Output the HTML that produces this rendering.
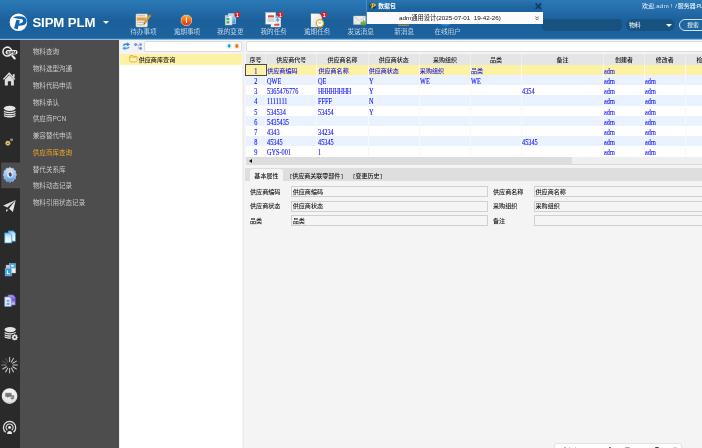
<!DOCTYPE html>
<html lang="zh-CN">
<head>
<meta charset="utf-8">
<title>SIPM PLM</title>
<style>
*{box-sizing:border-box;margin:0;padding:0}
html,body{width:702px;height:448px;overflow:hidden;background:#f3f3f3}
body{position:relative;font-family:"Liberation Sans","Noto Sans CJK SC",sans-serif;font-size:6.1px;color:#222;line-height:1}
.abs{position:absolute}
#app{position:absolute;left:0;top:0;width:702px;height:448px;will-change:transform}
/* header */
#hdr{position:absolute;left:0;top:0;width:702px;height:39.5px;background:linear-gradient(#2b79b6 0,#2570ad 8px,#1c609b 20px,#1d639e 37.6px,#2c78b6 38.6px,#8dbae0 39.5px)}
#logo{position:absolute;left:6px;top:10px;width:28px;height:24px}
#brand{position:absolute;left:32.4px;top:16.3px;font-size:13.2px;font-weight:bold;color:#fff;letter-spacing:-0.1px;white-space:nowrap;line-height:14px}
#caret{position:absolute;left:103px;top:21.3px;width:0;height:0;border-left:3px solid transparent;border-right:3px solid transparent;border-top:3px solid #fff}
.tb{position:absolute;top:28px;font-weight:300;width:40px;text-align:center;color:#fff;font-size:6.6px;line-height:8px;white-space:nowrap;margin-left:.5px}
.ico{position:absolute}
/* sidebar */
#icons{position:absolute;left:0;top:39.5px;width:20px;height:409px;background:#2a2a2a}
#menu{position:absolute;left:20px;top:39.5px;width:99px;height:409px;background:#4d4d4d}
.mi{position:absolute;left:12.8px;color:#cacaca;font-size:6.56px;line-height:8px;white-space:nowrap}
.mi.on{color:#f0a428}
/* tree */
#tree{position:absolute;left:119px;top:39.5px;width:123.3px;height:409px;background:#fff;border-left:1.5px solid #eee}
#treebar{position:absolute;left:0;top:0;width:100%;height:14px;background:#f3f3f3}
.inp{position:absolute;background:#fff;border:0.6px solid #dcdcdc;border-radius:2px}
#trow{position:absolute;left:0;top:14.2px;width:100%;height:11.2px;background:#fdf1a4}
/* right panel */
#right{position:absolute;left:243px;top:39.5px;width:459px;height:409px;background:#f4f4f4;box-shadow:inset .6px 0 0 #e6e6e6}
table{border-collapse:collapse;table-layout:fixed;position:absolute;left:2.7px;top:14.5px;width:486.5px}
th{height:11px;background:#e5e5e5;font-weight:500;color:#111;font-size:6px;text-align:center;border-right:0.6px solid #eeeeee;padding:0;line-height:10px;white-space:nowrap;overflow:hidden}
td{height:10px;font-family:"Liberation Serif","Noto Sans CJK SC",serif;color:#1515f0;-webkit-text-stroke:.15px #1515f0;font-size:6.05px;padding:0;line-height:10px;white-space:nowrap;overflow:hidden;border-right:0.6px solid rgba(255,255,255,.35)}
td span{font-family:"Noto Sans CJK SC",sans-serif;font-size:6.05px;font-weight:500;-webkit-text-stroke:0}
td i.n{font-style:normal;display:inline-block;font-size:7.2px;transform:scaleX(.87);transform-origin:0 50%;position:relative;top:1.5px;-webkit-text-stroke:.12px #1515f0}
td span{position:relative;top:.9px}
td:first-child i.n{transform-origin:50% 50%}
td:first-child{text-align:center;padding:0}
td:nth-child(2),td:nth-child(3){padding-left:1px}
tr.a td{background:#e9f2fe}
tr.b td{background:#fff}
tr.s td{background:#fdf1a4}
tr.h11 td{height:11px;line-height:11px}

#hs{position:absolute;left:3px;top:117.6px;width:460px;height:8.3px;background:#efefef;border-bottom:0.6px solid #d8d8d8}
#thumb{position:absolute;left:0;top:0;width:325.5px;height:8.3px;background:#dddddd}
#larr{position:absolute;left:2.6px;top:2px;width:0;height:0;border-top:2px solid transparent;border-bottom:2px solid transparent;border-right:3.2px solid #111}
#tabs{position:absolute;left:2px;top:128.6px;width:460px;height:12.6px;background:#dedede}
#tab1{position:absolute;left:5px;top:1px;width:33px;height:11.6px;background:#f4f4f4;border-radius:2.5px 2.5px 0 0;text-align:center;font-size:6.1px;line-height:14.2px;color:#111;font-weight:500}
.tab{position:absolute;top:2px;font-size:6px;line-height:12.4px;color:#111;font-weight:500;white-space:nowrap}
.tab b{font-family:"Liberation Mono",monospace;font-weight:normal;font-size:5.6px;letter-spacing:-.4px;position:relative;top:-.3px}
.lb{position:absolute;font-size:6.1px;line-height:8px;color:#111;font-weight:500;white-space:nowrap}
.fi{position:absolute;height:11.2px;border:0.7px solid #d0d0d0;background:#f5f5f5;font-size:6.1px;line-height:9px;color:#111;font-weight:500;padding-left:.5px;white-space:nowrap;border-radius:0.5px}
#ime{position:absolute;left:310.5px;top:403.3px;width:128px;height:10px;background:#fff;border:0.6px solid #e2e2e2;border-radius:3px 3px 0 0}

#sbox{position:absolute;left:541.5px;top:18.600px;width:80.5px;height:12.800px;background:#175280;border-radius:4.500px}
#ssel{position:absolute;left:625.600px;top:18.600px;width:49.600px;height:12.800px;background:#175280;border-radius:6.400px;color:#fff;font-size:5.9px;line-height:12.600px}
#ssel span{position:absolute;left:3.400px;top:0}
#ssel i{position:absolute;left:40.100px;top:5.300px;width:0;height:0;border-left:3.200px solid transparent;border-right:3.200px solid transparent;border-top:3.300px solid #fff}
#sbtn{position:absolute;left:679px;top:18.600px;width:40px;height:12.800px;border:.7px solid #cfe0ee;border-radius:6.400px;color:#fff;font-size:5.8px;line-height:11.600px;padding-left:7.200px;background:#1f659f}
#welcome{position:absolute;left:642px;top:1.900px;color:#fff;font-size:6px;line-height:8px;white-space:nowrap;width:70px;height:8px}
#welcome span{position:absolute;top:0}
#pop{position:absolute;left:366px;top:0;width:176.4px;height:24.200px;border-left:.6px solid #4d8cc0}
#poptitle{position:absolute;left:0;top:0;width:100%;height:12px;background:linear-gradient(#2a77b3,#1e66a2 60%,#1b609b);color:#fff;font-weight:bold;font-size:5.8px;line-height:12.6px}
#poptitle span{position:absolute;left:11.200px;top:0;letter-spacing:.1px}
#popbody{position:absolute;left:.4px;top:12px;width:176px;height:12.200px;background:#fbfbfb;font-size:6.25px;line-height:12px;color:#111}
#popbody span{position:absolute;left:31.6px;top:0;white-space:nowrap}
#ime i{position:absolute;top:3.2px;width:2.4px;height:3px;border-radius:1px 1px 0 0}
</style>
</head>
<body>
<div id="app">
<div id="hdr">
<svg id="logo" viewBox="0 0 523 448"><circle cx="232" cy="228" r="163" fill="#fff"/><path d="M150 340L220 358L258 190L195 180Z" fill="#1465b0"/><path d="M130 137C170 118 260 105 320 125C375 145 398 190 382 232C365 277 300 302 226 292L236 250C280 255 315 235 318 205C320 175 290 160 225 162C190 160 160 150 130 137Z" fill="#1465b0"/></svg>
<svg id="hsvg" class="abs" style="left:0;top:0" width="702" height="40" viewBox="0 0 702 40">
<defs>
<linearGradient id="gOr" x1="0" y1="0" x2="0" y2="1"><stop offset="0" stop-color="#fbb030"/><stop offset=".5" stop-color="#f46a14"/><stop offset="1" stop-color="#e4280c"/></linearGradient>
<linearGradient id="gPap" x1="0" y1="0" x2="1" y2="1"><stop offset="0" stop-color="#ffffff"/><stop offset="1" stop-color="#d8d8d8"/></linearGradient>
<linearGradient id="gBl" x1="0" y1="0" x2="0" y2="1"><stop offset="0" stop-color="#bfe3f7"/><stop offset="1" stop-color="#3c8fd0"/></linearGradient>
<linearGradient id="gGr" x1="0" y1="0" x2="0" y2="1"><stop offset="0" stop-color="#9ad34a"/><stop offset="1" stop-color="#4a9a18"/></linearGradient>
</defs>
<!-- todo notepad -->
<g>
<rect x="136" y="14" width="11.4" height="12.9" rx=".8" fill="#f1eee6" stroke="#cfcabb" stroke-width=".5"/>
<rect x="136.700" y="17.400" width="9.600" height="3.300" fill="#f7a63a"/>
<path d="M138.500 15.800h6.500M138.500 19h6M138.500 22.300h6M138.500 24.800h6.500" stroke="#8c8a84" stroke-width=".6"/>
<path d="M137.300 15.800h.6M137.300 19h.6M137.300 22.300h.6M137.300 24.800h.6" stroke="#6d6b66" stroke-width=".7"/>
<path d="M143.800 24.100l.500-2.100 5.300-7.400 1.500 1.100-5.300 7.400z" fill="#e2a233" stroke="#9c6a18" stroke-width=".35"/>
<path d="M149.600 14.600l.600-.800 1.500 1.100-.600.800z" fill="#d8362c"/>
<path d="M143.800 24.100l.3-1.300 .8.600z" fill="#333"/>
</g>
<!-- overdue octagon -->
<g>
<path d="M184 15.300h4.800l2.700 2.700v4.700l-2.700 2.700h-4.800l-2.700-2.700v-4.700z" fill="url(#gOr)" stroke="#f3d2c0" stroke-width=".7" stroke-linejoin="round"/>
<rect x="185.900" y="17.300" width="1.100" height="5.800" rx=".4" fill="#fff"/>
</g>
<!-- my changes -->
<g>
<rect x="228.400" y="13.800" width="7.300" height="10" fill="url(#gBl)" stroke="#d8ecf8" stroke-width=".5"/>
<rect x="231" y="15.500" width="1.200" height="6" fill="#fff" opacity=".8"/>
<rect x="225.200" y="15.500" width="6.800" height="9.500" fill="#e9eef2" stroke="#b9c4cc" stroke-width=".5"/>
<rect x="226.400" y="18" width="3" height="2.300" fill="#4fae5b"/><rect x="226.400" y="21.200" width="3" height="2.300" fill="#4fae5b"/>
<rect x="226.400" y="16.300" width="2" height="1" fill="#5aa0d8"/>
<circle cx="237.300" cy="14.700" r="3" fill="#d8202c"/>
<text x="237.300" y="16.600" font-family="Liberation Sans,sans-serif" font-size="5" font-weight="bold" fill="#fff" text-anchor="middle">1</text>
</g>
<!-- my tasks -->
<g>
<rect x="271" y="16" width="9.800" height="11" fill="#f4f4f4" stroke="#d0d0d0" stroke-width=".4"/>
<rect x="274" y="23.700" width="5.400" height="2" fill="#e8433c"/>
<rect x="265.700" y="12.500" width="10" height="11.600" fill="#f7f7f7" stroke="#d0d0d0" stroke-width=".4"/>
<rect x="268" y="15.300" width="6" height="2.100" fill="#e8433c"/>
<rect x="267.500" y="18.200" width="7" height="3.800" fill="#c9d6e2"/>
<path d="M275.500 16c2 .2 3 1.500 3 3.500h1.300l-2.100 2.800-2.100-2.800h1.300c0-1.300-.5-2-1.400-2.300z" fill="#4aa3e0" stroke="#9cd0f2" stroke-width=".3"/>
<circle cx="280.400" cy="14.700" r="3" fill="#d8202c"/>
<text x="280.400" y="16.600" font-family="Liberation Sans,sans-serif" font-size="5" font-weight="bold" fill="#fff" text-anchor="middle">1</text>
</g>
<!-- overdue task -->
<g>
<path d="M311 13.700h8.300l2.500 2.500v10.900h-10.800z" fill="url(#gPap)" stroke="#cfcfcf" stroke-width=".3"/>
<circle cx="319.900" cy="23.300" r="3.600" fill="#fbfbf6" stroke="#e9a81e" stroke-width="1.200"/>
<path d="M318.300 22.300l1.600 1.100 1.500-1" stroke="#777" stroke-width=".6" fill="none"/>
<circle cx="324.100" cy="14.700" r="3" fill="#d8202c"/>
<text x="324.100" y="16.600" font-family="Liberation Sans,sans-serif" font-size="5" font-weight="bold" fill="#fff" text-anchor="middle">1</text>
</g>
<!-- send message -->
<g>
<rect x="353.500" y="16" width="12" height="8.400" rx=".5" fill="#ececec" stroke="#c4c4c4" stroke-width=".4"/>
<path d="M353.700 16.300l5.800 4.500 5.800-4.500" stroke="#a8a8a8" stroke-width=".5" fill="none"/>
<path d="M353.800 24.200l4.200-4M365.200 24.200l-4.200-4" stroke="#cdcdcd" stroke-width=".4" fill="none"/>
<path d="M360.800 22h2.400v-2.200l3 3.400-3 3.400v-2.200h-2.400z" fill="url(#gGr)" stroke="#3f8a14" stroke-width=".3"/>
</g>
<!-- new message / online user fragments -->
<rect x="398" y="24.600" width="11" height="1.300" fill="#b08a55"/>
<path d="M440.500 24.300h10c-1.500 1.600-8.500 1.600-10 0z" fill="#3d9be8"/>
</svg>
<div id="sbox"></div>
<div id="ssel"><span>物料</span><i></i></div>
<div id="sbtn">搜索</div>
<div id="welcome"><span style="left:0">欢迎,</span><span style="left:14.3px;letter-spacing:.35px;opacity:.85">adm</span><span style="left:28.6px;opacity:.85">!</span><span style="left:33.3px">/</span><span style="left:35.7px">服务器</span><span style="left:53.4px;font-size:5.2px;letter-spacing:-.1px">:PLM</span></div>
<div id="pop">
<div id="poptitle"><svg class="abs" style="left:2.300px;top:2.200px" width="8" height="7.200" viewBox="0 0 16 14.400"><ellipse cx="7.400" cy="7.600" rx="7.200" ry="6.400" fill="#133f72"/><path d="M2 9C1 4 6 .5 12 2C7 2 3.500 5 2 9Z" fill="#f5b32a"/><path d="M6.500 3h4.500c2.300 0 3.300 1.500 2.700 3.400c-.6 1.900-2.200 2.900-4.300 2.900h-1.500l-.9 3.500h-3zM8.700 5l-.6 2.300h1.100c.9 0 1.500-.4 1.700-1.200c.2-.8-.2-1.100-1-1.100z" fill="#f8c030"/></svg><span>数据包</span>
<svg class="abs" style="left:168.400px;top:2.500px" width="6.600" height="6.600" viewBox="0 0 6 6"><path d="M.6.6l4.800 4.800M5.400.6L.6 5.400" stroke="#143a60" stroke-width="1.500"/></svg></div>
<div id="popbody"><span>adm通用设计(2025-07-01&nbsp; 19-42-26)</span>
<svg class="abs" style="left:168.100px;top:3.800px" width="4.200" height="4.600" viewBox="0 0 4.600 5"><path d="M.5.500l1.800 1.700L4.100.5M.5 2.700l1.800 1.700 1.800-1.700" stroke="#444" stroke-width=".8" fill="none"/></svg></div>
</div>
<div id="brand">SIPM PLM</div>
<div id="caret"></div>
<div class="tb" style="left:122.9px">待办事项</div>
<div class="tb" style="left:166.4px">逾期事项</div>
<div class="tb" style="left:209.8px">我的变更</div>
<div class="tb" style="left:253.2px">我的任务</div>
<div class="tb" style="left:296.7px">逾期任务</div>
<div class="tb" style="left:340.1px">发送消息</div>
<div class="tb" style="left:383.6px">新消息</div>
<div class="tb" style="left:427.1px">在线用户</div>
</div>
<div id="icons"></div>
<svg id="sideico" class="abs" style="left:0;top:0" width="22" height="448" viewBox="0 0 22 448">
<defs><linearGradient id="gGear" x1="0" y1="0" x2="0" y2="1"><stop offset="0" stop-color="#d6e6fb"/><stop offset=".5" stop-color="#9fc3f3"/><stop offset="1" stop-color="#4f8fe6"/></linearGradient><linearGradient id="gDoc" x1="0" y1="0" x2="0" y2="1"><stop offset="0" stop-color="#7cc6ee"/><stop offset=".4" stop-color="#d4eefb"/><stop offset="1" stop-color="#ffffff"/></linearGradient><linearGradient id="gPur" x1="0" y1="0" x2="0" y2="1"><stop offset="0" stop-color="#a9a0f0"/><stop offset=".5" stop-color="#6a5cd8"/><stop offset="1" stop-color="#e4e0fa"/></linearGradient><radialGradient id="gChat" cx=".5" cy=".35" r=".7"><stop offset="0" stop-color="#ffffff"/><stop offset=".7" stop-color="#e6e6e6"/><stop offset="1" stop-color="#bdbdbd"/></radialGradient></defs>
<rect x="1.2" y="162.500" width="18.800" height="25.700" fill="#4d4d4d"/>
<svg x="0" y="42" width="22" height="22" viewBox="0 0 448 448"><circle cx="150" cy="195" r="90" fill="none" stroke="#ececec" stroke-width="32"/><path d="M252 282L300 335" stroke="#f2f2f2" stroke-width="42" stroke-linecap="round"/><rect x="115" y="165" width="242" height="90" rx="45" fill="#ededed"/><text x="236" y="236" font-family="Liberation Sans,sans-serif" font-weight="bold" font-size="78" fill="#222" text-anchor="middle">SIPM</text></svg>
<svg x="0" y="68" width="22" height="22" viewBox="0 0 448 448"><path d="M98 232L190 140L282 232V358H225V270H160V358H98Z" fill="#dedede"/><path d="M70 232L187 108L305 232" fill="none" stroke="#e6e6e6" stroke-width="28" stroke-linejoin="miter"/><rect x="262" y="125" width="36" height="62" fill="#dedede"/></svg>
<svg x="0" y="101" width="22" height="22" viewBox="0 0 448 448"><ellipse cx="197" cy="150" rx="118.0" ry="55" fill="#e6e6e6"/><path d="M79.0 195c20 38 216.0 38 236.0 0v26c-20 40 -216.0 40 -236.0 0z" fill="#dedede"/><path d="M79.0 237c20 38 216.0 38 236.0 0v26c-20 40 -216.0 40 -236.0 0z" fill="#dedede"/><path d="M79.0 279c20 38 216.0 38 236.0 0v26c-20 40 -216.0 40 -236.0 0z" fill="#dedede"/></svg>
<svg x="0" y="132" width="22" height="22" viewBox="0 0 448 448"><circle cx="160" cy="230" r="50" fill="#dcba68"/><rect x="142" y="222" width="36" height="16" rx="6" fill="#4a3f26"/><circle cx="235" cy="160" r="30" fill="#9a9a9a"/><circle cx="235" cy="160" r="9" fill="#555"/></svg>
<svg x="0" y="163" width="22" height="22" viewBox="0 0 448 448"><path d="M337 240L314 275L319 318L283 334L268 374L230 369L200 395L170 369L132 374L117 334L81 318L86 275L63 240L86 205L81 163L117 146L131 106L170 111L200 85L230 111L268 106L283 146L319 162L314 205Z" fill="url(#gGear)" stroke="#b9d3f5" stroke-width="12" stroke-linejoin="round"/><ellipse cx="203" cy="236" rx="56" ry="66" fill="#dfe9f8"/><ellipse cx="208" cy="234" rx="30" ry="44" fill="#4a4a4a" transform="rotate(-18 208 234)"/></svg>
<svg x="0" y="195" width="22" height="22" viewBox="0 0 448 448"><path d="M65 215L320 100L150 255Z" fill="#dcdcdc"/><path d="M320 100L185 275L262 345Z" fill="#e8e8e8"/><path d="M125 295L172 300L125 348Z" fill="#dcdcdc"/></svg>
<svg x="0" y="226" width="22" height="22" viewBox="0 0 448 448"><path d="M170 100H270L315 145V310H170Z" fill="url(#gDoc)" stroke="#2b9ad6" stroke-width="16" stroke-linejoin="round"/><path d="M95 140H195L240 185V345H95Z" fill="url(#gDoc)" stroke="#2b9ad6" stroke-width="16" stroke-linejoin="round"/></svg>
<svg x="0" y="259" width="22" height="22" viewBox="0 0 448 448"><rect x="190" y="95" width="125" height="92" fill="#4aa8e0" stroke="#8fd0f4" stroke-width="10"/><rect x="225" y="120" width="55" height="40" fill="#cfeaf8"/><rect x="120" y="120" width="80" height="72" fill="#c8c8c8"/><rect x="225" y="185" width="95" height="100" fill="#ededed" stroke="#bdbdbd" stroke-width="8"/><rect x="105" y="190" width="130" height="155" fill="#3a9bdc" stroke="#8fd0f4" stroke-width="10"/><path d="M150 230v70h50" stroke="#e8f6ff" stroke-width="22" fill="none"/></svg>
<svg x="0" y="290" width="22" height="22" viewBox="0 0 448 448"><path d="M165 100H265L310 145V305H165Z" fill="url(#gPur)" stroke="#6a5cd8" stroke-width="14" stroke-linejoin="round"/><path d="M95 140H190L230 180V335H95Z" fill="#eceaf9" stroke="#8a7fe0" stroke-width="14" stroke-linejoin="round"/><rect x="135" y="200" width="60" height="40" fill="#58b8c8"/><rect x="135" y="260" width="60" height="45" fill="#58b8c8"/></svg>
<svg x="0" y="322" width="22" height="22" viewBox="0 0 448 448"><ellipse cx="207" cy="155" rx="113.0" ry="55" fill="#e6e6e6"/><path d="M94.0 200c20 38 206.0 38 226.0 0v26c-20 40 -206.0 40 -226.0 0z" fill="#dedede"/><path d="M94.0 242c20 38 206.0 38 226.0 0v26c-20 40 -206.0 40 -226.0 0z" fill="#dedede"/><path d="M94.0 284c20 38 206.0 38 226.0 0v26c-20 40 -206.0 40 -226.0 0z" fill="#dedede"/><circle cx="300" cy="312" r="80" fill="#2a2a2a"/><path d="M362 312L342 330L344 356L318 354L300 374L282 354L256 356L258 330L238 312L258 294L256 268L282 270L300 250L318 270L344 268L342 294Z" fill="#f0f0f0" stroke="#f0f0f0" stroke-width="10" stroke-linejoin="round"/><circle cx="300" cy="312" r="22" fill="#2a2a2a"/></svg>
<svg x="0" y="354" width="22" height="22" viewBox="0 0 448 448"><path d="M195 153L195 65" stroke="#c4c4c4" stroke-width="21" stroke-linecap="round"/><path d="M231 163L275 86" stroke="#c4c4c4" stroke-width="21" stroke-linecap="round"/><path d="M257 189L334 145" stroke="#c4c4c4" stroke-width="21" stroke-linecap="round"/><path d="M267 225L355 225" stroke="#c4c4c4" stroke-width="21" stroke-linecap="round"/><path d="M257 261L334 305" stroke="#c4c4c4" stroke-width="21" stroke-linecap="round"/><path d="M231 287L275 364" stroke="#c4c4c4" stroke-width="21" stroke-linecap="round"/><path d="M195 297L195 385" stroke="#c4c4c4" stroke-width="21" stroke-linecap="round"/><path d="M159 287L115 364" stroke="#c4c4c4" stroke-width="21" stroke-linecap="round"/><path d="M133 261L56 305" stroke="#c4c4c4" stroke-width="21" stroke-linecap="round"/><path d="M123 225L35 225" stroke="#8a8a8a" stroke-width="22" stroke-linecap="round"/><path d="M133 189L56 145" stroke="#555" stroke-width="22" stroke-linecap="round"/><path d="M159 163L115 86" stroke="#555" stroke-width="22" stroke-linecap="round"/></svg>
<svg x="0" y="385" width="22" height="22" viewBox="0 0 448 448"><circle cx="195" cy="225" r="160" fill="url(#gChat)"/><path d="M215 205h60a14 14 0 0 1 14 14v50a14 14 0 0 1 -14 14h-15l-18 32l-8-32h-19z" fill="#8a8a8a"/><path d="M118 160h110a14 14 0 0 1 14 14v58a14 14 0 0 1 -14 14h-50l-32 34l4-34h-32a14 14 0 0 1 -14-14v-58a14 14 0 0 1 14-14z" fill="#767676" stroke="#ececec" stroke-width="8"/></svg>
<svg x="0" y="417" width="22" height="22" viewBox="0 0 448 448"><path d="M115 312A125 125 0 1 1 275 312" fill="none" stroke="#e2e2e2" stroke-width="26"/><path d="M150 270A72 72 0 1 1 240 270" fill="none" stroke="#e2e2e2" stroke-width="22"/><circle cx="195" cy="215" r="30" fill="#e8e8e8"/><path d="M145 345c0-40 20-58 50-58s50 18 50 58z" fill="#e8e8e8"/></svg>
</svg>
<div id="menu">
<div class="mi" style="top:8.2px">物料查询</div>
<div class="mi" style="top:25.2px">物料选型沟通</div>
<div class="mi" style="top:42.2px">物料代码申请</div>
<div class="mi" style="top:59.2px">物料承认</div>
<div class="mi" style="top:75.2px">供应商PCN</div>
<div class="mi" style="top:92.2px">兼容替代申请</div>
<div class="mi on" style="top:109.2px">供应商库查询</div>
<div class="mi" style="top:126.2px">替代关系库</div>
<div class="mi" style="top:142.2px">物料动态记录</div>
<div class="mi" style="top:159.2px">物料引用状态记录</div>
</div>
<div id="tree"><div id="treebar">
<div class="inp" style="left:24.3px;top:1.7px;width:97.4px;height:10.4px"></div>
<svg class="abs" style="left:-4.500px;top:-1.500px" width="32" height="20" viewBox="0 0 702 439">
<path d="M150 165C175 120 215 118 250 128L245 100L305 142L240 178L246 152C215 145 185 150 168 172Z" fill="#2b7de2" stroke="#2b7de2" stroke-width="6" stroke-linejoin="round"/>
<path d="M295 200C270 245 230 247 195 237L200 265L140 223L205 187L199 213C230 220 260 215 277 193Z" fill="#3a9fe8" stroke="#3a9fe8" stroke-width="6" stroke-linejoin="round"/>
<path d="M455 150H510M490 150V232H515" stroke="#a4a4a4" stroke-width="12" fill="none"/>
<circle cx="430" cy="145" r="31" fill="#5b84e4"/><circle cx="540" cy="145" r="30" fill="#6a8ee8"/><circle cx="540" cy="228" r="30" fill="#5b84e4"/>
<circle cx="424" cy="138" r="10" fill="#9db8f2"/><circle cx="534" cy="138" r="10" fill="#a9c0f4"/><circle cx="534" cy="221" r="10" fill="#9db8f2"/>
</svg>
<svg class="abs" style="left:97.500px;top:-1.500px" width="32" height="20" viewBox="0 0 702 439">
<rect x="186" y="116" width="114" height="118" rx="10" fill="#f6fafc" stroke="#d3dde4" stroke-width="7"/>
<path d="M222 135H268V168H292L245 218L198 168H222Z" fill="#19a1d4"/>
<rect x="356" y="116" width="114" height="118" rx="10" fill="#fcf8f5" stroke="#e2d6cc" stroke-width="7"/>
<ellipse cx="413" cy="176" rx="36" ry="42" fill="#f4720e"/>
</svg>

</div><div id="trow"><svg class="abs" style="left:8.900px;top:1.800px" width="8.800" height="7.600" viewBox="0 0 8.800 7.600"><path d="M.8 1.800C.8 1 1.300.600 2 .600H3.300C3.800.600 4 .900 4.400 1.400H6.900C7.700 1.400 8.100 1.900 8.100 2.600V5.600C8.100 6.400 7.700 6.800 6.900 6.800H2C1.200 6.800.8 6.400.8 5.600Z" fill="#fde68a" stroke="#c9992a" stroke-width=".7"/><path d="M1.300 2.700H7.700" stroke="#e8c048" stroke-width=".6"/><path d="M1.400 3.300H7.600V5.700C7.600 6.100 7.300 6.300 6.900 6.300H2.100C1.700 6.300 1.400 6.100 1.400 5.700Z" fill="#fdf3bc"/></svg><span style="position:absolute;left:18.7px;top:2.1px;font-size:6.1px;line-height:8px;color:#111;font-weight:500">供应商库查询</span></div></div>
<div id="right">
<div class="inp" style="left:2.8px;top:1.7px;width:470px;height:10.4px"></div>
<table><colgroup><col style="width:20.1px"><col style="width:51.2px"><col style="width:51.2px"><col style="width:51.2px"><col style="width:51.2px"><col style="width:51.2px"><col style="width:81.8px"><col style="width:41px"><col style="width:40.6px"><col style="width:47px"></colgroup>
<tr><th>序号</th><th>供应商代号</th><th>供应商名称</th><th>供应商状态</th><th>采购组织</th><th>品类</th><th>备注</th><th>创建者</th><th>修改者</th><th>检验状态</th></tr>
<tr class="s"><td style="outline:.8px solid #4a4a4a;outline-offset:-.8px"><i class="n">1</i></td><td><span>供应商编码</span></td><td><span>供应商名称</span></td><td><span>供应商状态</span></td><td><span>采购组织</span></td><td><span>品类</span></td><td></td><td><i class="n">adm</i></td><td></td><td></td></tr>
<tr class="a"><td><i class="n">2</i></td><td><i class="n">QWE</i></td><td><i class="n">QE</i></td><td><i class="n">Y</i></td><td><i class="n">WE</i></td><td><i class="n">WE</i></td><td></td><td><i class="n">adm</i></td><td><i class="n">adm</i></td><td></td></tr>
<tr class="b"><td><i class="n">3</i></td><td><i class="n">5365476776</i></td><td><i class="n" style="letter-spacing:-.45px">HHHHHHHH</i></td><td><i class="n">Y</i></td><td></td><td></td><td><i class="n">4354</i></td><td><i class="n">adm</i></td><td><i class="n">adm</i></td><td></td></tr>
<tr class="a h11"><td><i class="n">4</i></td><td><i class="n">1111111</i></td><td><i class="n">FFFF</i></td><td><i class="n">N</i></td><td></td><td></td><td></td><td><i class="n">adm</i></td><td><i class="n">adm</i></td><td></td></tr>
<tr class="b"><td><i class="n">5</i></td><td><i class="n">534534</i></td><td><i class="n">53454</i></td><td><i class="n">Y</i></td><td></td><td></td><td></td><td><i class="n">adm</i></td><td><i class="n">adm</i></td><td></td></tr>
<tr class="a"><td><i class="n">6</i></td><td><i class="n">5435435</i></td><td></td><td></td><td></td><td></td><td></td><td><i class="n">adm</i></td><td><i class="n">adm</i></td><td></td></tr>
<tr class="b"><td><i class="n">7</i></td><td><i class="n">4343</i></td><td><i class="n">34234</i></td><td></td><td></td><td></td><td></td><td><i class="n">adm</i></td><td><i class="n">adm</i></td><td></td></tr>
<tr class="a"><td><i class="n">8</i></td><td><i class="n">45345</i></td><td><i class="n">45345</i></td><td></td><td></td><td></td><td><i class="n">45345</i></td><td><i class="n">adm</i></td><td><i class="n">adm</i></td><td></td></tr>
<tr class="b h11"><td><i class="n">9</i></td><td><i class="n">GYS-001</i></td><td><i class="n">1</i></td><td></td><td></td><td></td><td></td><td><i class="n">adm</i></td><td><i class="n">adm</i></td><td></td></tr>
</table>
<div id="hs"><div id="thumb"></div><div id="larr"></div></div>
<div id="tabs"><div id="tab1">基本属性</div><div class="tab" style="left:44.2px"><b>[</b>供应商关联零部件<b>]</b></div><div class="tab" style="left:107.6px"><b>[</b>变更历史<b>]</b></div></div>
<div class="lb" style="left:7px;top:148.2px">供应商编码</div><div class="fi" style="left:48.2px;top:146.5px;width:196.7px">供应商编码</div>
<div class="lb" style="left:250px;top:148.2px">供应商名称</div><div class="fi" style="left:291px;top:146.5px;width:200px">供应商名称</div>
<div class="lb" style="left:7px;top:162.8px">供应商状态</div><div class="fi" style="left:48.2px;top:161.1px;width:196.7px;line-height:8px">供应商状态</div>
<div class="lb" style="left:250px;top:162.8px">采购组织</div><div class="fi" style="left:291px;top:161.1px;width:200px;line-height:8px">采购组织</div>
<div class="lb" style="left:7px;top:177.4px">品类</div><div class="fi" style="left:48.2px;top:175.7px;width:196.7px">品类</div>
<div class="lb" style="left:250px;top:177.4px">备注</div><div class="fi" style="left:291px;top:175.7px;width:200px"></div>
<div id="ime"><i style="left:9.5px;background:#f08a3c"></i><i style="left:14.5px;background:#bbb;width:1px"></i><i style="left:20.5px;background:#bbb;width:1px"></i><i style="left:54.6px;background:#444"></i><i style="left:70px;background:#aaa;width:5px"></i><i style="left:100.5px;background:#444;width:4px"></i><i style="left:118px;background:#bcd8f0;width:4px"></i></div>
</div>
</div>
</body>
</html>
